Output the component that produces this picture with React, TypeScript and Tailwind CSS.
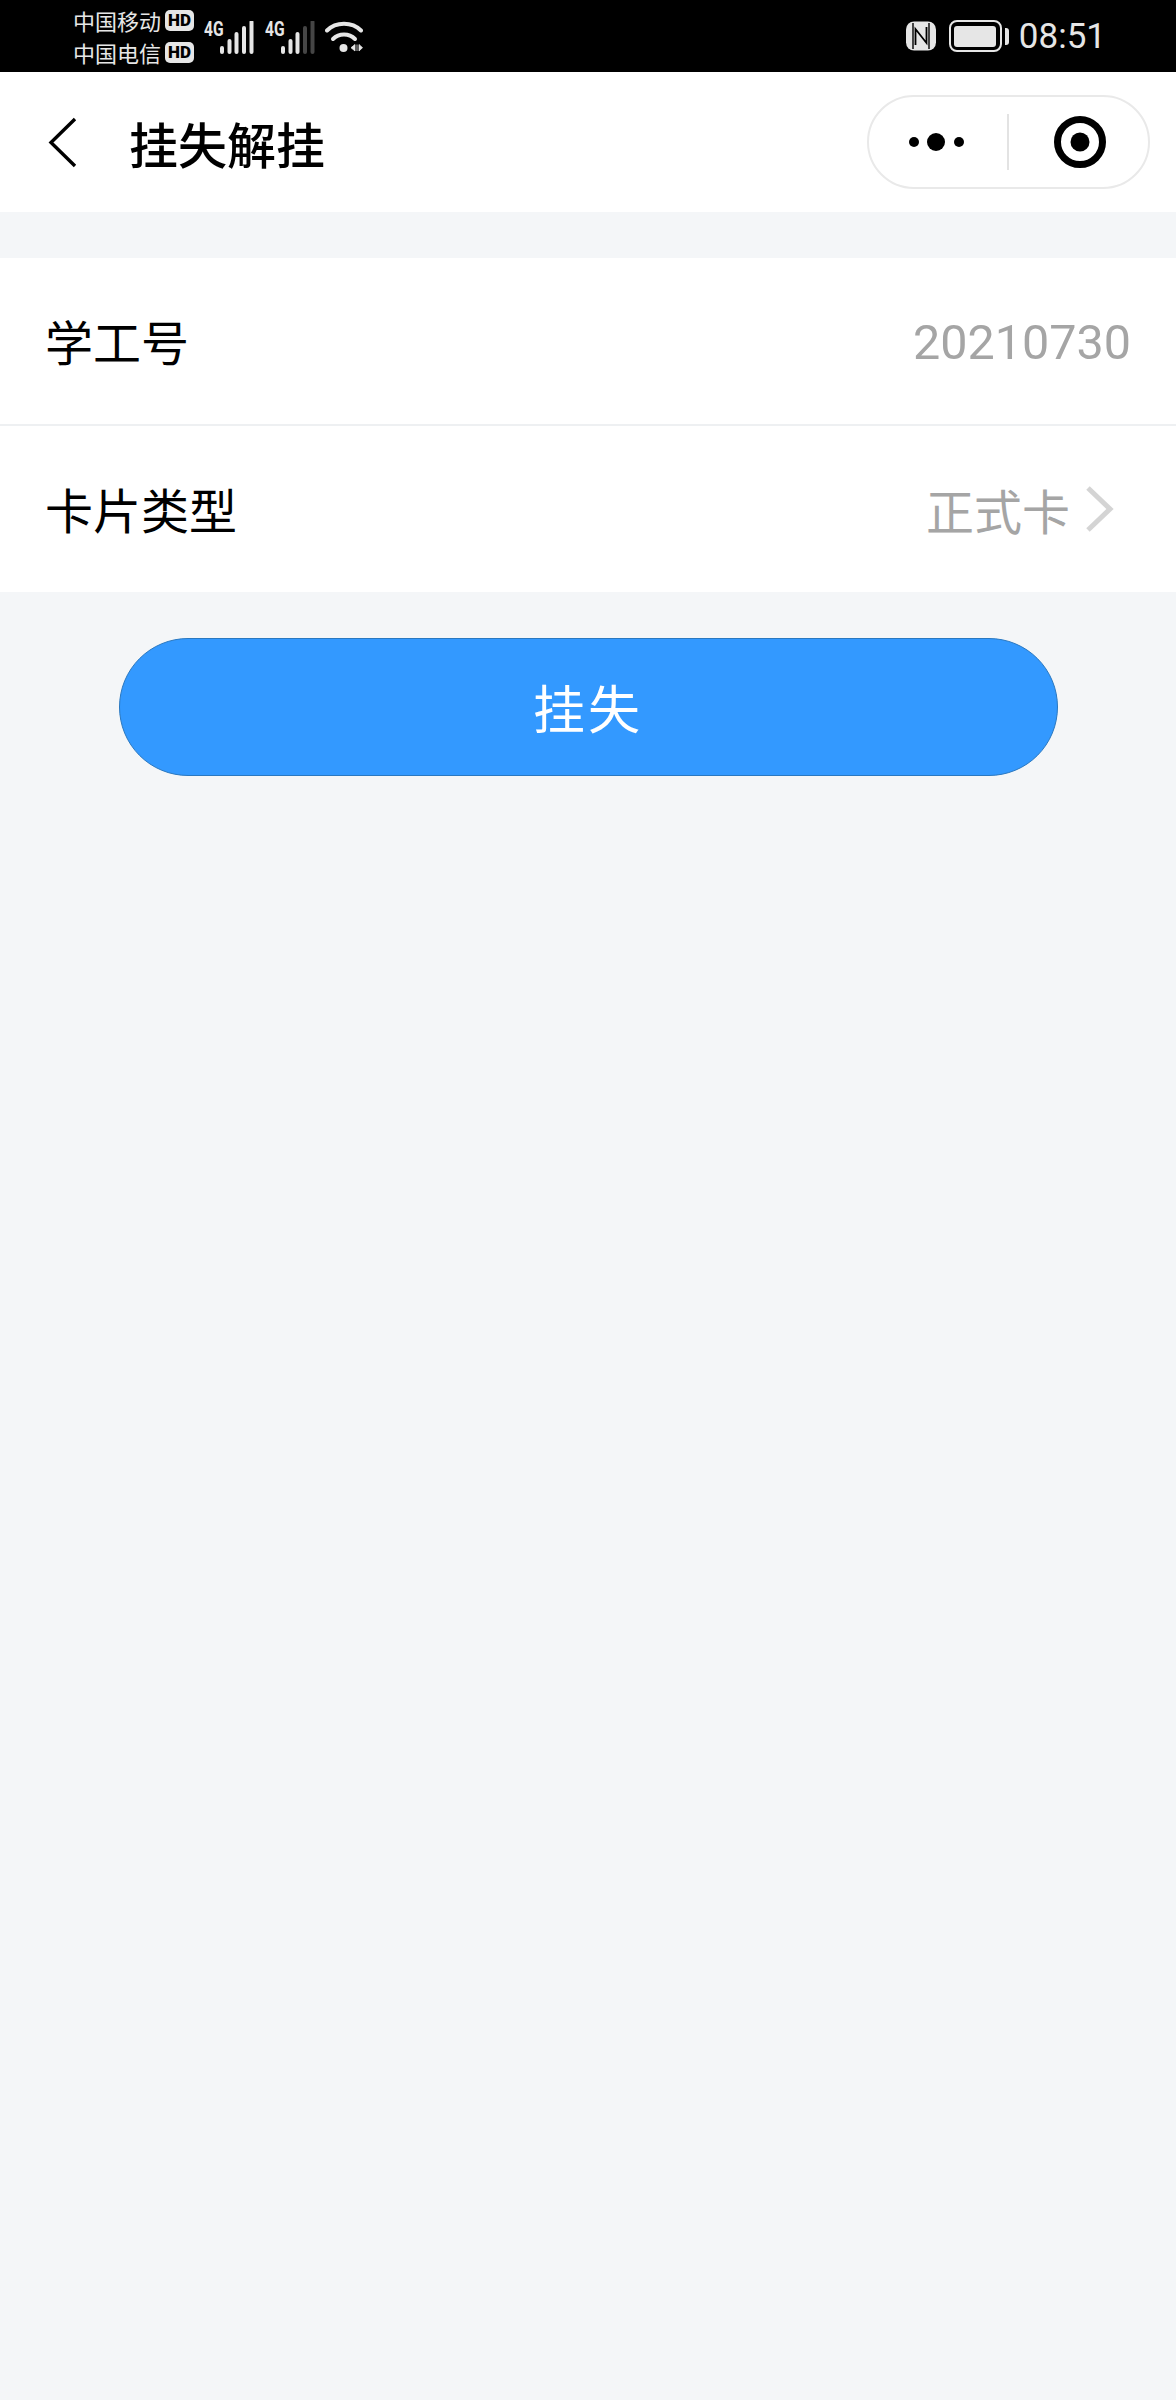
import React from "react";

const cjk = "font-['Noto_Sans_CJK_SC','Noto_Sans',sans-serif]";

function HdBadge() {
  return (
    <span className="flex h-[21px] w-[29px] items-center justify-center rounded-[5px] bg-[#e6e6e6] font-['Roboto',sans-serif] text-[17px] leading-none font-black text-black">
      HD
    </span>
  );
}

function Carrier({ name }: { name: string }) {
  return (
    <div className="flex h-[32px] items-center gap-[4px]">
      <span className="w-[88px] text-[22px] leading-none whitespace-nowrap text-[#e6e6e6]">{name}</span>
      <HdBadge />
    </div>
  );
}

function Signal({ dim }: { dim: boolean }) {
  const bars = [
    { x: 18, top: 27 },
    { x: 25.5, top: 20 },
    { x: 32.5, top: 13 },
    { x: 40, top: 7 },
    { x: 47.5, top: 1 },
  ];
  return (
    <div className="relative h-[34px] w-[52px]">
      <span className="absolute top-[-2px] left-0 origin-top-left scale-x-[0.78] font-['Roboto',sans-serif] text-[20px] leading-[20px] font-bold text-[#e6e6e6]">
        4G
      </span>
      <svg width="52" height="34" viewBox="0 0 52 34" className="absolute top-0 left-0">
        {bars.map((b, i) => (
          <line
            key={b.x}
            x1={b.x}
            x2={b.x}
            y1={b.top}
            y2={31}
            stroke={dim && i > 2 ? "#454545" : "#e6e6e6"}
            strokeWidth="4"
            strokeLinecap="round"
          />
        ))}
      </svg>
    </div>
  );
}

function Wifi() {
  return (
    <svg width="38" height="34" viewBox="0 0 38 34" fill="none">
      <path d="M2 9.5C11 0.5 27 0.5 36 9.5" stroke="#e6e6e6" strokeWidth="4" strokeLinecap="round" />
      <path d="M8 18C14 12 24 12 30 18" stroke="#e6e6e6" strokeWidth="4" strokeLinecap="round" />
      <circle cx="18.5" cy="27" r="4" fill="#e6e6e6" />
      <path d="M30 23.5V30L26 26.7Z M32 23.5V30 M34 23.5V30L37.5 26.7Z" fill="#e6e6e6" stroke="#e6e6e6" strokeWidth="0.8" />
    </svg>
  );
}

function Nfc() {
  return (
    <svg width="30" height="30" viewBox="0 0 30 30">
      <rect x="0" y="0.5" width="30" height="29" rx="8" fill="#e6e6e6" />
      <path d="M9.5 24V8L20.5 22V6" fill="none" stroke="#000" strokeWidth="1.8" />
      <path d="M7 2V28M23 2V28" stroke="#000" strokeWidth="1.4" />
    </svg>
  );
}

function Battery() {
  return (
    <div className="flex items-center gap-[3px]">
      <div className="flex h-[32px] w-[53px] items-center justify-center rounded-[8px] border-2 border-[#e6e6e6]">
        <div className="h-[21px] w-[42px] rounded-[3px] bg-[#e6e6e6]" />
      </div>
      <div className="h-[17px] w-[4px] rounded-r-[3px] bg-[#e6e6e6]" />
    </div>
  );
}

function StatusBar() {
  return (
    <div className="flex h-[72px] items-center bg-black pr-[70px] pl-[73px]">
      <div className="flex flex-col">
        <Carrier name="中国移动" />
        <Carrier name="中国电信" />
      </div>
      <div className="mt-[4px] ml-[10px]">
        <Signal dim={false} />
      </div>
      <div className="mt-[4px] ml-[9px]">
        <Signal dim={true} />
      </div>
      <div className="mt-[4px] ml-[8px]">
        <Wifi />
      </div>
      <div className="ml-auto flex items-center">
        <Nfc />
        <div className="ml-[13px]">
          <Battery />
        </div>
        <span className="ml-[10px] font-['Roboto',sans-serif] text-[35px] leading-none text-[#e6e6e6]">08:51</span>
      </div>
    </div>
  );
}

function NavBar() {
  return (
    <div className="flex h-[140px] items-center bg-white pr-[26px]">
      <svg width="30" height="52" viewBox="0 0 30 52" fill="none" className="ml-[48px]">
        <path d="M27 3L3 26.5L27 50" stroke="#000" strokeWidth="3.4" />
      </svg>
      <h1 className="ml-[51px] text-[49px] leading-none font-medium text-black">挂失解挂</h1>
      <div className="ml-auto flex h-[94px] w-[283px] items-center rounded-full border-2 border-[#e9e9e9]">
        <div className="flex h-[56px] w-[140px] items-center justify-center border-r-2 border-[#e3e3e3] pl-[2px]">
          <svg width="62" height="20" viewBox="0 0 62 20">
            <circle cx="6" cy="10" r="5" fill="#000" />
            <circle cx="28" cy="10" r="9" fill="#000" />
            <circle cx="51" cy="10" r="5" fill="#000" />
          </svg>
        </div>
        <div className="flex flex-1 items-center justify-center pl-[3px]">
          <svg width="52" height="52" viewBox="0 0 52 52" fill="none">
            <circle cx="26" cy="26" r="22.5" stroke="#000" strokeWidth="7" />
            <circle cx="26" cy="26" r="9.5" fill="#000" />
          </svg>
        </div>
      </div>
    </div>
  );
}

function Row({ label, children }: { label: string; children: React.ReactNode }) {
  return (
    <div className="flex h-[166px] items-center justify-between bg-white pl-[45px]">
      <span className="pb-[2px] text-[48px] leading-none text-black">{label}</span>
      {children}
    </div>
  );
}

export default function App() {
  return (
    <div className={`min-h-[2400px] w-full bg-[#f4f6f8] ${cjk}`}>
      <StatusBar />
      <NavBar />
      <div className="mt-[46px]">
        <Row label="学工号">
          <span className="pt-[4px] pr-[45px] font-['Roboto',sans-serif] text-[48.5px] leading-none text-[#a5a5a5]">20210730</span>
        </Row>
        <div className="h-[2px] bg-[#eef0f2]" />
        <Row label="卡片类型">
          <div className="flex items-center pr-[61px]">
            <span className="pb-[1px] text-[48px] leading-none text-[#a5a5a5]">正式卡</span>
            <svg width="30" height="48" viewBox="0 0 30 48" fill="none" className="ml-[15px]">
              <path d="M3 3L25 24L3 45" stroke="#d4d4d4" strokeWidth="5" />
            </svg>
          </div>
        </Row>
      </div>
      <div className="mt-[46px] flex justify-center">
        <button className="flex h-[138px] w-[939px] items-center justify-center rounded-full border border-[#2a78c0] bg-[#3399ff] text-[52px] leading-none tracking-[3px] text-white">
          挂失
        </button>
      </div>
    </div>
  );
}
